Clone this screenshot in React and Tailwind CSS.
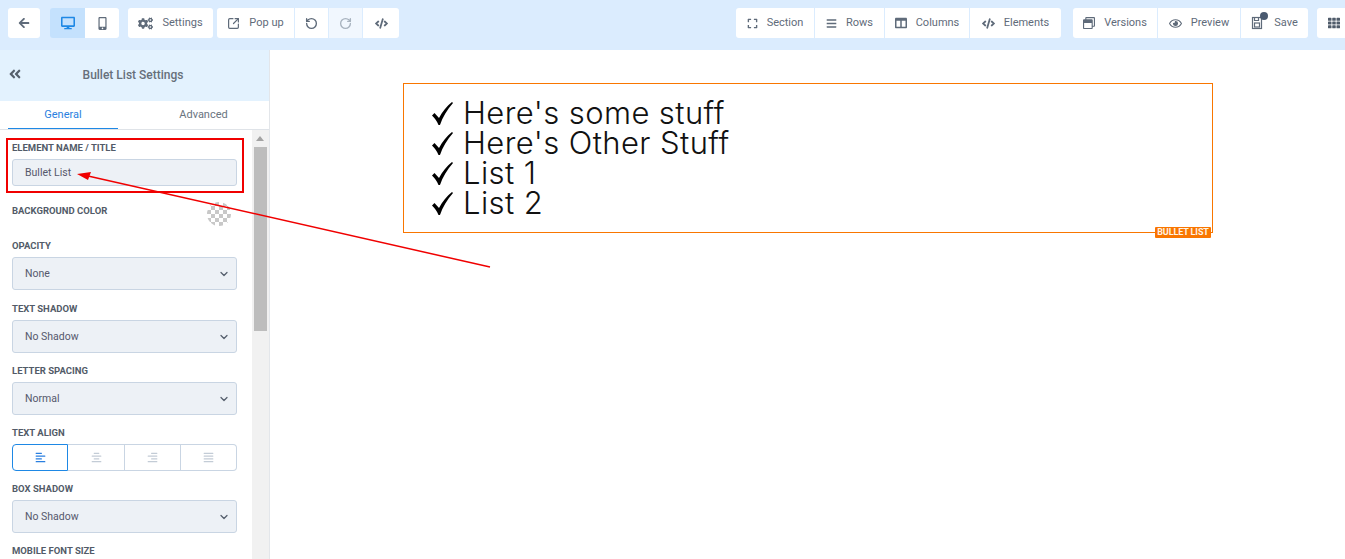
import React from 'react';
import { FaArrowLeft, FaDesktop, FaMobileAlt, FaCogs, FaCode, FaBars, FaRegEye, FaTh, FaAngleDoubleLeft, FaAlignLeft, FaAlignCenter, FaAlignRight, FaAlignJustify, FaRegWindowRestore, FaExpand, FaColumns } from 'react-icons/fa';
import { SquareArrowOutUpRight, RotateCcw, RotateCw, ChevronDown } from 'lucide-react';

const ToolButton = ({ icon, label, className = '' }) => (
  <div className={`flex h-[30px] shrink-0 items-center justify-center gap-[9px] bg-white text-[11px] text-[#5f6b7a] ${className}`}>
    {icon}
    {label && <span>{label}</span>}
  </div>
);

const SaveIcon = () => (
  <span className="relative block h-[14px] w-[14px]">
    <svg viewBox="0 0 14 14" className="h-[14px] w-[14px]" fill="none" stroke="#5f6b7a" strokeWidth="1.2">
      <rect x="1.5" y="1.5" width="9" height="11" />
      <rect x="3.5" y="7" width="5" height="4" />
      <path d="M3.5 1.5v3h4v-3" />
    </svg>
    <span className="absolute -right-[3px] -top-[4px] h-[8px] w-[8px] rounded-full bg-[#4a5a70]" />
  </span>
);

const Label = ({ children }) => (
  <div className="h-[12px] pt-[1px] text-[9.5px] font-bold uppercase leading-[12px] text-[#525b68]">{children}</div>
);

const Field = ({ label, value, mt, select = true }) => (
  <div className={mt}>
    <Label>{label}</Label>
    <div className={`mt-[6px] flex items-center justify-between rounded-[3px] border border-[#c9d5e3] bg-[#edf1f6] pl-[12px] pr-[6px] text-[10.5px] text-[#55586c] ${select ? 'h-[33px]' : 'h-[27px]'}`}>
      <span>{value}</span>
      {select && <ChevronDown size={12} strokeWidth={2.5} className="text-[#555f6d]" />}
    </div>
  </div>
);

const ListItem = ({ children }) => (
  <li className="flex h-[30px] items-center text-[31px] font-light leading-[30px] tracking-[0.4px] text-[#111] font-['Inter',sans-serif]">
    <svg viewBox="0 0 21 23" className="mr-[10px] h-[23px] w-[21px] shrink-0" fill="#000">
      <path d="M0 13.5L2.5 11L7 16C10 10 15 4 20 0L21 1C15 8 10.5 15 8 23H6.5C5 19 2.5 16 0 13.5Z" />
    </svg>
    <span>{children}</span>
  </li>
);

export default function App() {
  return (
    <div className="relative flex h-[559px] w-[1345px] flex-col overflow-hidden bg-white font-['Roboto',sans-serif]">
      <header className="flex h-[50px] shrink-0 items-start bg-[#dbecfe] pl-[8px] pt-[8px]">
        <ToolButton icon={<FaArrowLeft size={12} />} className="w-[32px] rounded-[3px] text-[#4f5b6a]" />
        <div className="ml-[10px] flex h-[30px] w-[69px] shrink-0 overflow-hidden rounded-[3px]">
          <div className="flex w-[35px] items-center justify-center bg-[#c4e1fd] text-[#1e88e5]"><FaDesktop size={14} /></div>
          <ToolButton icon={<FaMobileAlt size={13} />} className="flex-1" />
        </div>
        <div className="ml-[9px] flex h-[30px] shrink-0 overflow-hidden rounded-[3px]">
          <ToolButton icon={<FaCogs size={15} />} label="Settings" className="w-[85px]" />
        </div>
        <div className="ml-[4px] flex h-[30px] shrink-0 gap-[1px] overflow-hidden rounded-[3px]">
          <ToolButton icon={<SquareArrowOutUpRight size={13} strokeWidth={2.2} />} label="Pop up" className="w-[77px]" />
          <ToolButton icon={<RotateCcw size={13} strokeWidth={2.5} />} className="w-[33px]" />
          <ToolButton icon={<RotateCw size={13} strokeWidth={2.5} className="text-[#a8b3bf]" />} className="w-[33px] !bg-[#f1f7fe]" />
          <ToolButton icon={<FaCode size={13} />} className="w-[36px]" />
        </div>

        <div className="ml-[337px] flex h-[30px] shrink-0 gap-[1px] overflow-hidden rounded-[3px]">
          <ToolButton icon={<FaExpand size={11} />} label="Section" className="w-[78px]" />
          <ToolButton icon={<FaBars size={11} />} label="Rows" className="w-[69px]" />
          <ToolButton icon={<FaColumns size={12} />} label="Columns" className="w-[84px]" />
          <ToolButton icon={<FaCode size={13} />} label="Elements" className="w-[91px]" />
        </div>
        <div className="ml-[12px] flex h-[30px] shrink-0 gap-[1px] overflow-hidden rounded-[3px]">
          <ToolButton icon={<FaRegWindowRestore size={12} />} label="Versions" className="w-[84px]" />
          <ToolButton icon={<FaRegEye size={13} />} label="Preview" className="w-[82px]" />
          <ToolButton icon={<SaveIcon />} label="Save" className="w-[67px]" />
        </div>
        <div className="ml-[9px] flex h-[30px] w-[50px] shrink-0 items-center rounded-[3px] bg-white pl-[11px] text-[#4f5b6a]"><FaTh size={12} /></div>
      </header>

      <div className="flex min-h-0 flex-1">
        <aside className="flex w-[270px] shrink-0 flex-col border-r border-[#e3e6ea]">
          <div className="relative flex h-[51px] shrink-0 items-center justify-center bg-[#e3f2fe] pb-[2px] pr-[3px] text-[12px] font-medium text-[#666f7a]">
            <FaAngleDoubleLeft size={14} className="absolute left-[8px] top-[17px] text-[#56606c]" />
            Bullet List Settings
          </div>
          <div className="flex h-[29px] shrink-0 border-b border-[#dfe3e8] pl-[8px] text-[11px]">
            <div className="flex w-[110px] items-center justify-center border-b-[1px] border-[#1e88e5] pt-[1px] text-[#2a7fe0]">General</div>
            <div className="flex flex-1 items-center justify-center pl-[20px] text-[#6a7480]">Advanced</div>
          </div>
          <div className="flex min-h-0 flex-1">
            <div className="w-[252px] overflow-hidden pl-[12px] pr-[15px] pt-[11px]">
              <Field label="Element Name / Title" value="Bullet List" select={false} />
              <div className="mt-[18px] flex h-[12px] items-start justify-between pt-[1px] text-[9.5px] font-bold uppercase leading-[12px] text-[#525b68]">
                <span>Background Color</span>
                <svg viewBox="0 0 24 24" className="-mt-[3px] mr-[6px] h-[24px] w-[24px] shrink-0">
                  <defs>
                    <pattern id="checker" width="8" height="8" patternUnits="userSpaceOnUse">
                      <rect width="8" height="8" fill="#fff" />
                      <rect width="4" height="4" fill="#c8c8c8" />
                      <rect x="4" y="4" width="4" height="4" fill="#c8c8c8" />
                    </pattern>
                  </defs>
                  <circle cx="12" cy="12" r="12" fill="url(#checker)" />
                </svg>
              </div>
              <Field label="Opacity" value="None" mt="mt-[23px]" />
              <Field label="Text Shadow" value="No Shadow" mt="mt-[12px]" />
              <Field label="Letter Spacing" value="Normal" mt="mt-[11px]" />
              <div className="mt-[11px]">
                <Label>Text Align</Label>
                <div className="mt-[6px] flex h-[27px] text-[#c3ccd6]">
                  <div className="flex w-[56px] items-center justify-center rounded-l-[4px] border border-[#1e88e5] text-[#2a7fe0]"><FaAlignLeft size={11} /></div>
                  <div className="flex w-[57px] items-center justify-center border-y border-r border-[#c9d5e3]"><FaAlignCenter size={11} /></div>
                  <div className="flex w-[56px] items-center justify-center border-y border-r border-[#c9d5e3]"><FaAlignRight size={11} /></div>
                  <div className="flex w-[56px] items-center justify-center rounded-r-[4px] border-y border-r border-[#c9d5e3]"><FaAlignJustify size={11} /></div>
                </div>
              </div>
              <Field label="Box Shadow" value="No Shadow" mt="mt-[11px]" />
              <Field label="Mobile Font Size" value="" mt="mt-[11px]" />
            </div>
            <div className="flex w-[17px] shrink-0 flex-col items-start bg-[#f1f1f1] pl-[2px]">
              <span className="ml-[2px] mt-[6px] h-0 w-0 border-x-[4px] border-b-[5px] border-x-transparent border-b-[#a3a3a3]" />
              <div className="mt-[6px] h-[184px] w-[13px] bg-[#bdbdbd]" />
            </div>
          </div>
        </aside>

        <main className="min-w-0 flex-1 pl-[133px] pt-[33px]">
          <div className="relative h-[150px] w-[810px] border border-[#f97600] pl-[28px] pt-[14px]">
            <ul>
              <ListItem>Here's some stuff</ListItem>
              <ListItem>Here's Other Stuff</ListItem>
              <ListItem>List 1</ListItem>
              <ListItem>List 2</ListItem>
            </ul>
            <span className="absolute -bottom-[6px] right-[1px] flex h-[11px] w-[56px] items-center justify-center rounded-[1px] bg-[#f97600] text-[9px] font-bold uppercase leading-[11px] tracking-[-0.1px] text-[#fff3e6]">Bullet List</span>
          </div>
        </main>
      </div>

      {/* annotation drawn on top of the screenshot */}
      <div className="absolute left-[6px] top-[138px] h-[55px] w-[238px] border-2 border-[#f00000]" />
      <svg className="pointer-events-none absolute left-0 top-0" width="1345" height="559">
        <line x1="490" y1="267" x2="88" y2="176" stroke="#f00000" strokeWidth="1.5" />
        <polygon points="77,174 91,172 88,180" fill="#f00000" />
      </svg>
    </div>
  );
}
